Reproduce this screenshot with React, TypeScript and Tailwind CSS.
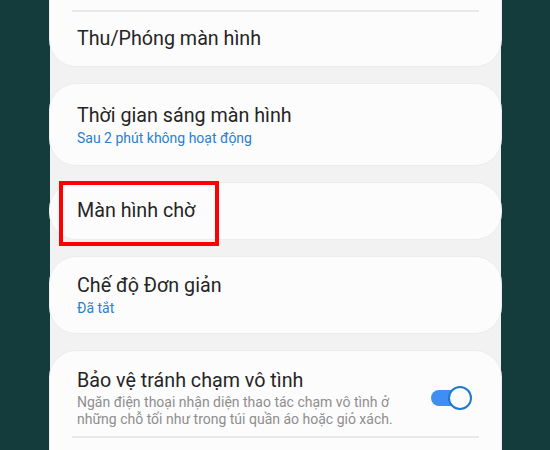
export default function App() {
  return (
    <div
      className="flex h-[450px] w-[550px] overflow-hidden bg-[#143c3c] pl-[50px]"
      style={{ fontFamily: "Roboto, 'Noto Sans', sans-serif" }}
    >
      <div className="flex w-[451px] shrink-0 flex-col gap-[18px] bg-[#f2f2f2]">
        {/* top card, cut off above */}
        <div className="-mt-[40px] shrink-0 rounded-b-[26px] bg-[#fcfcfc] pt-[50px] shadow-[0_0_0_1px_#ececec]">
          <div className="mx-[22px] h-[2px] bg-[#e8e8e8]" />
          <div className="flex h-[54px] items-center px-[27px] text-[19.7px] text-[#252525]">
            Thu/Phóng màn hình
          </div>
        </div>

        <div className="flex h-[81px] shrink-0 flex-col justify-center rounded-[26px] bg-[#fcfcfc] px-[27px] shadow-[0_0_0_1px_#ececec]">
          <div className="text-[19.7px] leading-[26px] text-[#252525]">Thời gian sáng màn hình</div>
          <div className="text-[14px] leading-[18px] text-[#2a7fd0]">Sau 2 phút không hoạt động</div>
        </div>

        <div className="relative flex h-[56px] shrink-0 items-center rounded-[26px] bg-[#fcfcfc] px-[27px] shadow-[0_0_0_1px_#ececec]">
          <span className="text-[19.7px] text-[#252525]">Màn hình chờ</span>
          <div className="absolute left-[9px] top-[-2px] h-[65px] w-[160px] border-[4px] border-[#ff0000]" />
        </div>

        <div className="flex h-[76px] shrink-0 flex-col justify-center rounded-[26px] bg-[#fcfcfc] px-[27px] shadow-[0_0_0_1px_#ececec]">
          <div className="text-[19.7px] leading-[26px] text-[#252525]">Chế độ Đơn giản</div>
          <div className="text-[14px] leading-[18px] text-[#2a7fd0]">Đã tắt</div>
        </div>

        <div className="shrink-0 rounded-t-[26px] bg-[#fcfcfc] pt-[17px] shadow-[0_0_0_1px_#ececec]">
          <div className="flex items-center px-[27px]">
            <div className="w-[330px]">
              <div className="text-[19.7px] leading-[26px] text-[#252525]">Bảo vệ tránh chạm vô tình</div>
              <div className="text-[14px] leading-[17px] text-[#8e8e8e]">
                Ngăn điện thoại nhận diện thao tác chạm vô tình ở những chỗ tối như trong túi quần áo hoặc giỏ xách.
              </div>
            </div>
            <div className="relative ml-auto mr-[2px] h-[24px] w-[41px]">
              <div className="absolute left-0 top-[4px] h-[16px] w-[36px] rounded-full bg-[#3f8ef6]" />
              <div className="absolute right-0 top-0 h-[24px] w-[24px] rounded-full border-[2px] border-[#1f78d1] bg-[#fcfcfc]" />
            </div>
          </div>
          <div className="mx-[22px] mt-[8px] h-[2px] bg-[#e8e8e8]" />
          <div className="h-[40px]" />
        </div>
      </div>
    </div>
  );
}
